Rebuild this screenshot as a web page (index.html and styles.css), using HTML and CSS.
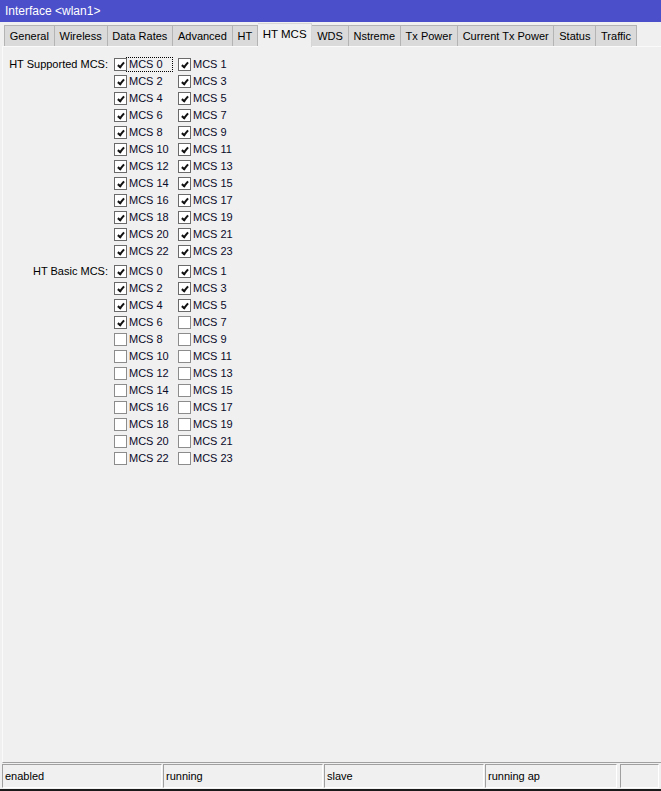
FILE: index.html
```html
<!DOCTYPE html>
<html lang="en">
<head>
  <meta charset="UTF-8">
  <title>Interface &lt;wlan1&gt;</title>
  <link rel="stylesheet" href="styles.css">
</head>
<body>
  <div class="window">
    <div class="titlebar">Interface &lt;wlan1&gt;</div>

    <div class="tabs">
      <div class="tab">General</div>
      <div class="tab">Wireless</div>
      <div class="tab">Data Rates</div>
      <div class="tab">Advanced</div>
      <div class="tab">HT</div>
      <div class="tab active">HT MCS</div>
      <div class="tab">WDS</div>
      <div class="tab">Nstreme</div>
      <div class="tab">Tx Power</div>
      <div class="tab">Current Tx Power</div>
      <div class="tab">Status</div>
      <div class="tab">Traffic</div>
    </div>

    <div class="panel">
      <div class="group" id="supported">
        <div class="label">HT Supported MCS:</div>
      </div>
      <div class="group" id="basic">
        <div class="label">HT Basic MCS:</div>
      </div>
    </div>

    <div class="statusbar">
      <div class="cell">enabled</div>
      <div class="cell">running</div>
      <div class="cell">slave</div>
      <div class="cell narrow">running ap</div>
      <div class="cell last"></div>
    </div>
    <div class="bottomline"></div>
  </div>

  <script>
    function fillGroup(id, checkedCount, focusFirst) {
      const group = document.getElementById(id);
      for (let i = 0; i < 24; i++) {
        const item = document.createElement('div');
        item.className = 'item';
        const box = document.createElement('span');
        box.className = i < checkedCount ? 'cb on' : 'cb';
        const txt = document.createElement('span');
        txt.className = (focusFirst && i === 0) ? 'txt focus' : 'txt';
        txt.textContent = 'MCS ' + i;
        item.appendChild(box);
        item.appendChild(txt);
        group.appendChild(item);
      }
    }

    fillGroup('supported', 24, true);
    fillGroup('basic', 7, false);
  </script>
</body>
</html>
```

FILE: styles.css
```css
body {
  margin: 0;
  padding: 0;
  background-color: #f0f0f0;
  font-family: "Liberation Sans", Arial, sans-serif;
  font-size: 11px;
  color: #000;
}

.window {
  height: 791px;
  display: flex;
  flex-direction: column;
  overflow: hidden;
}

.titlebar {
  height: 22px;
  line-height: 22px;
  padding-left: 5px;
  background-color: #4b4fc9;
  color: #fff;
  font-size: 12px;
}

.tabs {
  display: flex;
  align-items: flex-end;
  height: 24px;
  padding-left: 4px;
  position: relative;
  z-index: 1;
}

.tab {
  height: 20px;
  line-height: 20px;
  padding: 0 4.8px;
  background-color: #dadada;
  border: 1px solid #b4b4b4;
  border-bottom: none;
  border-left: none;
  white-space: nowrap;
}

.tab:first-child {
  border-left: 1px solid #b4b4b4;
}

.tab.active {
  height: 23px;
  line-height: 20px;
  margin-bottom: -1px;
  background-color: #f0f0f0;
  border-color: #d6d6d6;
  font-size: 11.5px;
}

.panel {
  flex: 1;
  margin-left: 2px;
  padding-top: 9px;
  border-top: 1px solid #fafafa;
  border-left: 1px solid #fafafa;
  border-bottom: 1px solid #a0a0a0;
}

.group {
  display: grid;
  grid-template-columns: 105px 64px 64px;
  grid-auto-rows: 17px;
}

.group + .group {
  margin-top: 3px;
}

.label {
  grid-row: 1;
  grid-column: 1;
  text-align: right;
  line-height: 17px;
}

.group .item:nth-child(even) {
  grid-column: 2;
}

.group .item:nth-child(odd) {
  grid-column: 3;
}

.item {
  display: flex;
  align-items: center;
  padding-left: 6px;
}

.cb {
  width: 11px;
  height: 11px;
  border: 1px solid #8c8c8c;
  background-color: #fff;
  position: relative;
  flex-shrink: 0;
}

.cb.on {
  border-color: #6a6a6a;
}

.cb.on::after {
  content: "";
  position: absolute;
  left: 3.5px;
  top: 1.5px;
  width: 2px;
  height: 5px;
  border-right: 2px solid #111;
  border-bottom: 2px solid #111;
  transform: rotate(40deg);
}

.txt {
  padding: 0 2px;
  line-height: 13px;
  color: #0a0a2a;
}

.txt.focus {
  outline: 1px dotted #000;
  padding-right: 9px;
}

.statusbar {
  display: flex;
  height: 25px;
  padding: 1px 2px 0 2px;
  gap: 1px;
}

.cell {
  width: 156px;
  height: 22px;
  line-height: 22px;
  padding-left: 2px;
  border: 1px solid #a0a0a0;
  border-right-color: #fff;
  border-bottom-color: #fff;
  white-space: nowrap;
}

.cell.narrow {
  width: 128px;
}

.cell.last {
  flex: 1;
  margin-left: 2px;
}

.bottomline {
  height: 2px;
  background-color: #1a1a1a;
}
```
